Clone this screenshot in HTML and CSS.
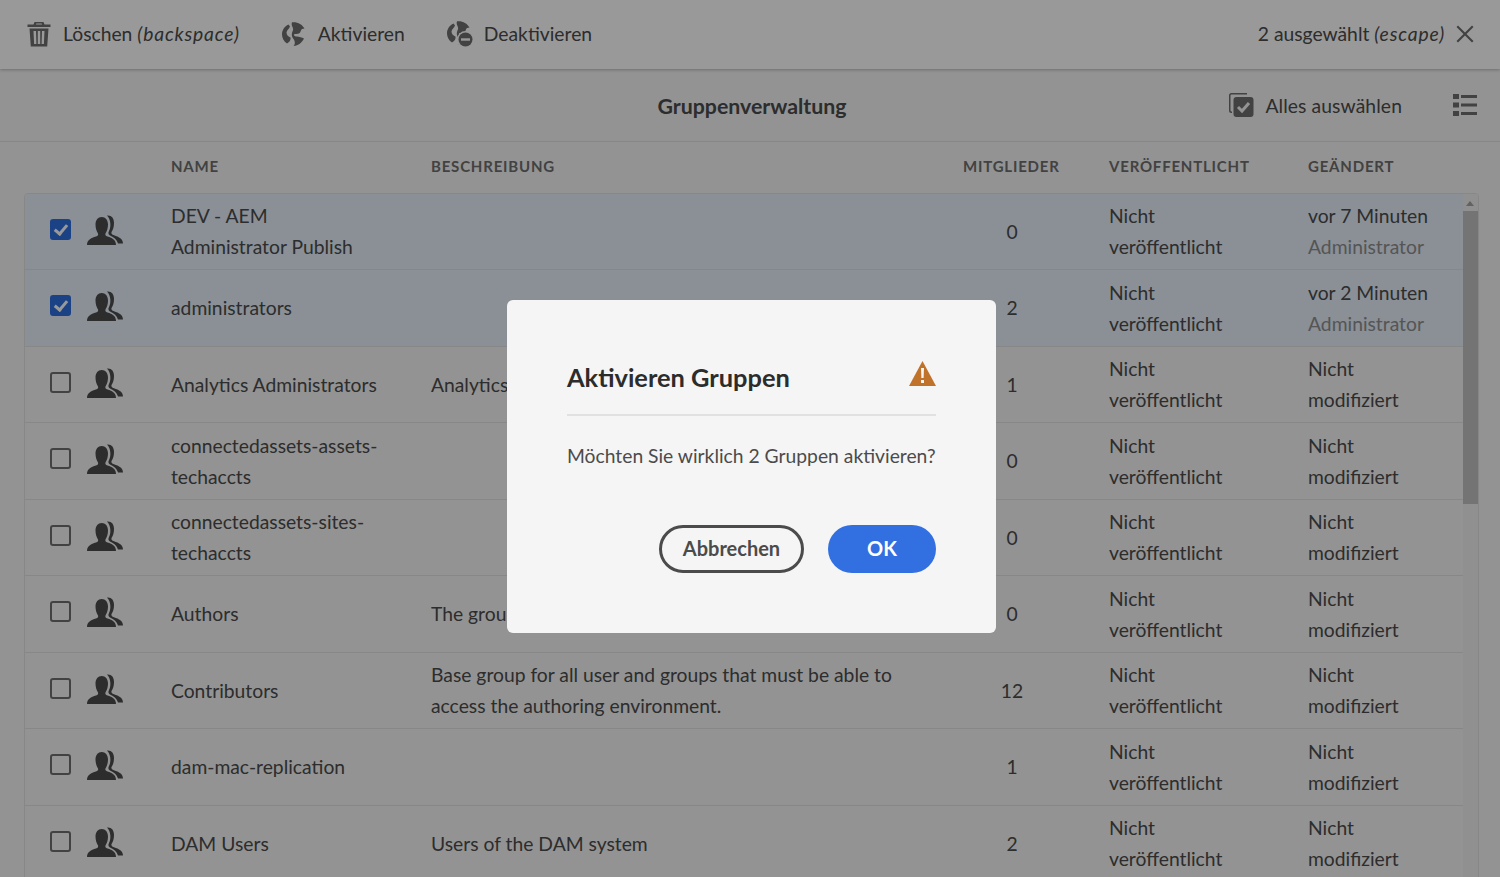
FILE: index.html
```html
<!DOCTYPE html>
<html lang="de">
  <head>
    <meta charset="UTF-8" />
    <meta name="viewport" content="width=device-width, initial-scale=1.0" />
    <title>Gruppenverwaltung</title>
    <link rel="stylesheet" href="styles.css">
  </head>
  <body>
    <svg class="defs" width="0" height="0">
      <symbol id="users" viewBox="0 0 36 30">
        <path d="M0 30C0 25 4 23 9 21.5C11 21 11.5 19.5 11 18.5C9.5 16 8.5 13 8.5 9.5C8.5 5 11 2 14.7 2C18.5 2 21 5 21 9.5C21 13 20 16 18.5 18.5C18 19.5 18.5 21 20.5 21.5C25.5 23 29 25 29 30Z"/>
        <path d="M20 .5C24.5 0 27 3 27 8C27 12 26 15 24.5 17C24 18.5 25 19.5 27 20.3C32 22 36 24 36 28.5H31C30 25 27 22 23 20.5C21.5 20 20.8 18 22 16C24 12.5 24.3 5 20 .5Z"/>
      </symbol>
      <symbol id="globe" viewBox="0 0 24 24">
        <path d="M6.500 2.500C2.500 4.500 0 8 0 12.500C0 16 1.800 19.500 5 21.500C7.500 20 9 18 8.500 15.500C6.500 15 4.500 13 4.500 10.500C5 8 7 7 8 4.500Z"/>
        <path d="M10 .3C15 -.5 20 2 22.500 6.500L20 7C18.500 8 19 10.500 17 11.500C15.500 12.300 13 11.500 12 12.500C11.500 13.500 13 14.500 15 14.500C17 14.500 20 15.500 22 16.500C20 20.500 16.500 23.700 11.500 24C13.500 22 13 19 11.500 17C10 15 9.500 13 10 11C10.500 9 11.500 8 11 6.500C10.500 4.500 9 3 10 .3Z"/>
      </symbol>
    </svg>

    <div class="page">
      <header class="action-bar">
        <div class="actions">
          <a class="action">
            <svg class="icon" viewBox="0 0 24 26" width="24" height="26">
              <path d="M6.500 3.500 7.500 1h9l1 2.500H23.500V6H.5V3.500ZM9 3.500h6l-.3-1H9.300ZM2.500 7.500h19l-1.300 18H3.800ZM6.500 10l.6 13h2.300L9 10Zm4.300 0v13h2.400V10Zm4.200 0-.4 13h2.300l.6-13Z" fill-rule="evenodd"/>
            </svg>
            <span>Löschen <em>(backspace)</em></span>
          </a>
          <a class="action">
            <svg class="icon" width="24" height="24"><use href="#globe"/></svg>
            <span>Aktivieren</span>
          </a>
          <a class="action">
            <svg class="icon icon-wide" viewBox="0 0 26 26" width="26" height="26">
              <use href="#globe" width="24" height="24"/>
              <circle cx="18.500" cy="18.500" r="8.500" fill="white"/>
              <circle cx="18.500" cy="18.500" r="7"/>
              <rect x="14" y="17.300" width="9" height="2.400" fill="white"/>
            </svg>
            <span>Deaktivieren</span>
          </a>
        </div>
        <div class="selection">
          <span>2 ausgewählt <em>(escape)</em></span>
          <svg class="icon" viewBox="0 0 18 18" width="18" height="18">
            <path d="M2 .5 9 7.500 16 .5 17.500 2 10.500 9 17.500 16 16 17.500 9 10.500 2 17.500 .5 16 7.500 9 .5 2Z"/>
          </svg>
        </div>
      </header>

      <div class="title-bar">
        <h1>Gruppenverwaltung</h1>
        <div class="title-tools">
          <a class="select-all">
            <svg class="icon" viewBox="0 0 26 26" width="26" height="26">
              <path d="M4 21H3.500A2.500 2.500 0 0 1 1 18.500V3.500A2.500 2.500 0 0 1 3.500 1H19V2.500H3.500A1 1 0 0 0 2.500 3.500V18.500A1 1 0 0 0 3.500 19.500H4Z"/>
              <rect x="5.500" y="5" width="20" height="20" rx="3"/>
              <path d="M10 15 14 19 21 11" fill="none" stroke="#f5f5f5" stroke-width="3"/>
            </svg>
            <span>Alles auswählen</span>
          </a>
          <svg class="icon" viewBox="0 0 26 24" width="26" height="24">
            <path d="M1 1h6v5H1Zm8 1h16v3H9ZM1 9.500h6v5H1Zm8 1h16v3H9ZM1 18h6v5H1Zm8 1h16v3H9Z"/>
          </svg>
        </div>
      </div>

      <div class="table-head">
        <span>Name</span>
        <span>Beschreibung</span>
        <span>Mitglieder</span>
        <span class="col-pub">Veröffentlicht</span>
        <span>Geändert</span>
      </div>

      <div class="table">
        <div class="rows">
          <div class="row selected">
            <span class="check"></span>
            <svg class="user-icon"><use href="#users"/></svg>
            <div class="col-name">DEV - AEM Administrator Publish</div>
            <div class="col-desc"></div>
            <div class="col-count">0</div>
            <div class="col-pub">Nicht veröffentlicht</div>
            <div class="col-mod">vor 7 Minuten<small>Administrator</small></div>
          </div>
          <div class="row selected">
            <span class="check"></span>
            <svg class="user-icon"><use href="#users"/></svg>
            <div class="col-name">administrators</div>
            <div class="col-desc"></div>
            <div class="col-count">2</div>
            <div class="col-pub">Nicht veröffentlicht</div>
            <div class="col-mod">vor 2 Minuten<small>Administrator</small></div>
          </div>
          <div class="row">
            <span class="check"></span>
            <svg class="user-icon"><use href="#users"/></svg>
            <div class="col-name">Analytics Administrators</div>
            <div class="col-desc">Analytics Administrators</div>
            <div class="col-count">1</div>
            <div class="col-pub">Nicht veröffentlicht</div>
            <div class="col-mod">Nicht modifiziert</div>
          </div>
          <div class="row">
            <span class="check"></span>
            <svg class="user-icon"><use href="#users"/></svg>
            <div class="col-name">connectedassets-assets-techaccts</div>
            <div class="col-desc"></div>
            <div class="col-count">0</div>
            <div class="col-pub">Nicht veröffentlicht</div>
            <div class="col-mod">Nicht modifiziert</div>
          </div>
          <div class="row">
            <span class="check"></span>
            <svg class="user-icon"><use href="#users"/></svg>
            <div class="col-name">connectedassets-sites-techaccts</div>
            <div class="col-desc"></div>
            <div class="col-count">0</div>
            <div class="col-pub">Nicht veröffentlicht</div>
            <div class="col-mod">Nicht modifiziert</div>
          </div>
          <div class="row">
            <span class="check"></span>
            <svg class="user-icon"><use href="#users"/></svg>
            <div class="col-name">Authors</div>
            <div class="col-desc">The group of authors</div>
            <div class="col-count">0</div>
            <div class="col-pub">Nicht veröffentlicht</div>
            <div class="col-mod">Nicht modifiziert</div>
          </div>
          <div class="row">
            <span class="check"></span>
            <svg class="user-icon"><use href="#users"/></svg>
            <div class="col-name">Contributors</div>
            <div class="col-desc">Base group for all user and groups that must be able to access the authoring environment.</div>
            <div class="col-count">12</div>
            <div class="col-pub">Nicht veröffentlicht</div>
            <div class="col-mod">Nicht modifiziert</div>
          </div>
          <div class="row">
            <span class="check"></span>
            <svg class="user-icon"><use href="#users"/></svg>
            <div class="col-name">dam-mac-replication</div>
            <div class="col-desc"></div>
            <div class="col-count">1</div>
            <div class="col-pub">Nicht veröffentlicht</div>
            <div class="col-mod">Nicht modifiziert</div>
          </div>
          <div class="row">
            <span class="check"></span>
            <svg class="user-icon"><use href="#users"/></svg>
            <div class="col-name">DAM Users</div>
            <div class="col-desc">Users of the DAM system</div>
            <div class="col-count">2</div>
            <div class="col-pub">Nicht veröffentlicht</div>
            <div class="col-mod">Nicht modifiziert</div>
          </div>
        </div>
        <div class="scrollbar">
          <span class="scroll-arrow"></span>
          <span class="scroll-thumb"></span>
        </div>
      </div>
    </div>

    <div class="overlay">
      <div class="dialog">
        <div class="dialog-head">
          <h2>Aktivieren Gruppen</h2>
          <svg viewBox="0 0 27 25" width="27" height="25">
            <path fill="#c0722a" d="M13.500 0 27 25H0Z"/>
            <path fill="#f5f5f5" d="M12 7h3l-.4 10h-2.200ZM12 19h3v3h-3Z"/>
          </svg>
        </div>
        <p>Möchten Sie wirklich 2 Gruppen aktivieren?</p>
        <div class="dialog-buttons">
          <button class="btn-cancel">Abbrechen</button>
          <button class="btn-ok">OK</button>
        </div>
      </div>
    </div>
  </body>
</html>
```

FILE: styles.css
```css
html,
body {
  height: 100%;
}
body {
  margin: 0;
  overflow: hidden;
  font-family: Lato, "Noto Sans", sans-serif;
  font-size: 19.3px;
  color: #4b4b4b;
  background-color: #f5f5f5;
}
.defs {
  position: absolute;
}
em {
  font-style: italic;
  letter-spacing: 0.85px;
}
.icon {
  fill: #6e6e6e;
  flex: none;
}
.page {
  height: 877px;
  overflow: hidden;
}
.action-bar {
  height: 69px;
  box-sizing: border-box;
  padding: 0 26px 2px 27px;
  display: flex;
  align-items: center;
  justify-content: space-between;
  background-color: white;
  box-shadow: 0 1px 3px rgba(0, 0, 0, 0.25);
  position: relative;
}
.actions {
  display: flex;
  gap: 42px;
}
.action {
  display: flex;
  align-items: center;
  gap: 12px;
}
.icon-wide {
  margin-right: -1px;
}
.selection {
  display: flex;
  align-items: center;
  gap: 11px;
}
.title-bar {
  height: 73px;
  box-sizing: border-box;
  padding: 2px 0 0 4px;
  border-bottom: 1px solid #e1e1e1;
  display: flex;
  align-items: center;
  justify-content: center;
  position: relative;
}
h1 {
  margin: 0;
  font-size: 21.3px;
  font-weight: 700;
  color: #4b4b4b;
}
.title-tools {
  position: absolute;
  right: 22px;
  top: 23px;
  display: flex;
  align-items: center;
  gap: 50px;
}
.select-all {
  display: flex;
  align-items: center;
  gap: 11px;
  letter-spacing: 0.1px;
}
.table-head {
  height: 51px;
  box-sizing: border-box;
  padding: 0 0 3px 171px;
  display: grid;
  grid-template-columns: 260px 532px 98px 247px 1fr;
  align-items: center;
  font-size: 15px;
  font-weight: 700;
  letter-spacing: 0.8px;
  text-transform: uppercase;
  color: #6e6e6e;
  white-space: nowrap;
}
.table {
  margin: 0 21px 0 24px;
  border: 1px solid #e1e1e1;
  border-radius: 4px;
  display: flex;
  overflow: hidden;
}
.rows {
  flex: 1;
  margin-top: -0.5px;
}
.row {
  height: 76.5px;
  box-sizing: border-box;
  display: grid;
  grid-template-columns: 62px 84px 260px 532px 98px 247px 1fr;
  align-items: center;
  border-bottom: 1px solid #e1e1e1;
  line-height: 31px;
}
.row.selected {
  background-color: #e6f0fb;
}
.check {
  width: 17px;
  height: 17px;
  margin-left: 25px;
  border: 2px solid #6e6e6e;
  border-radius: 3px;
  position: relative;
  top: -2px;
}
.selected .check {
  border-color: #2f6fe0;
  background-color: #2f6fe0;
}
.selected .check::after {
  content: "";
  position: absolute;
  left: 5px;
  top: 1px;
  width: 5px;
  height: 10px;
  border: solid white;
  border-width: 0 3px 3px 0;
  transform: rotate(40deg);
}
.user-icon {
  width: 36px;
  height: 30px;
  fill: #4b4b4b;
  margin-top: -3px;
}
.col-name {
  padding-right: 46px;
}
.col-desc {
  padding-right: 66px;
}
.col-count {
  text-align: center;
}
.row .col-pub {
  padding: 0 70px 0 48px;
}
.table-head .col-pub {
  padding-left: 48px;
}
.col-mod {
  padding-right: 30px;
}
.col-mod small {
  display: block;
  font-size: inherit;
  color: #8e8e8e;
}
.scrollbar {
  width: 15px;
  background-color: #f1f1f1;
  position: relative;
}
.scroll-arrow {
  position: absolute;
  top: 7px;
  left: 3px;
  border: 4.5px solid transparent;
  border-top: 0;
  border-bottom: 5px solid #a3a3a3;
}
.scroll-thumb {
  position: absolute;
  top: 17px;
  left: 0;
  right: 0;
  height: 293px;
  background-color: #c1c1c1;
}
.overlay {
  position: fixed;
  inset: 0;
  background-color: rgba(0, 0, 0, 0.4);
  padding: 300px 0 0 507px;
  box-sizing: border-box;
}
.dialog {
  width: 489px;
  height: 333px;
  box-sizing: border-box;
  padding: 0 60px;
  background-color: #f5f5f5;
  border-radius: 6px;
}
.dialog-head {
  height: 116px;
  box-sizing: border-box;
  padding-top: 59px;
  border-bottom: 2px solid #e1e1e1;
  display: flex;
  justify-content: space-between;
  align-items: flex-start;
}
.dialog-head svg {
  margin-top: 2px;
}
h2 {
  margin: 0;
  font-size: 25.4px;
  font-weight: 700;
  line-height: 36px;
  color: #2c2c2c;
}
.dialog p {
  margin: 26px 0 0;
  line-height: 28px;
  white-space: nowrap;
}
.dialog-buttons {
  margin-top: 55px;
  display: flex;
  justify-content: flex-end;
  gap: 24px;
}
button {
  height: 48px;
  border-radius: 24px;
  padding: 0 0 2px;
  font-family: inherit;
  font-size: 20px;
  font-weight: 700;
  cursor: pointer;
}
.btn-cancel {
  width: 145px;
  background: none;
  border: 3px solid #4b4b4b;
  color: #4b4b4b;
}
.btn-ok {
  width: 108px;
  border: none;
  background-color: #326fe0;
  color: white;
}
```
